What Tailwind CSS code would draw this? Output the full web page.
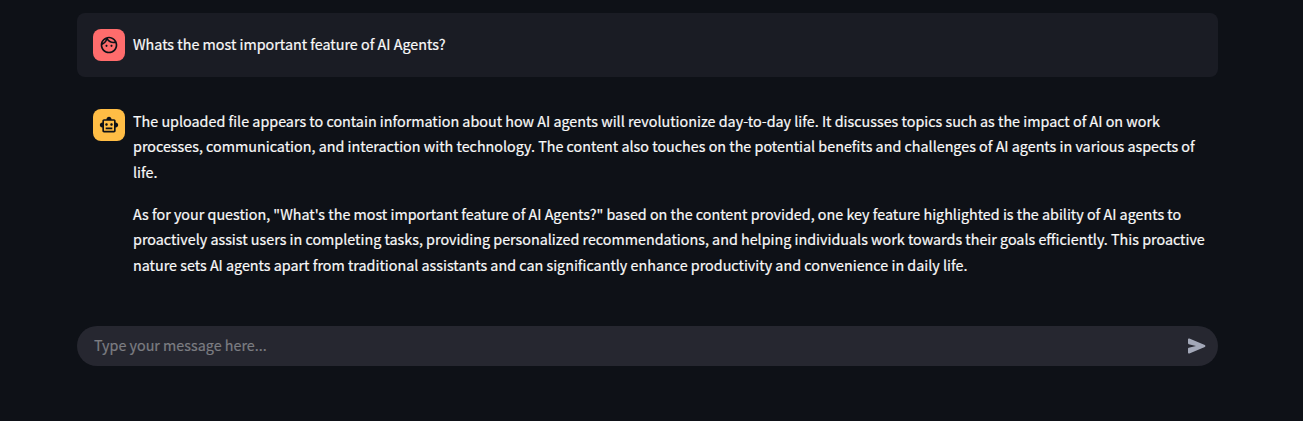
<!DOCTYPE html>
<html lang="en">
<head>
<meta charset="utf-8">
<title>Chat</title>
<script src="https://cdn.jsdelivr.net/npm/@tailwindcss/browser@4"></script>
</head>
<body class="h-screen overflow-hidden bg-[#0e1117] pl-[77px] pr-[85px] pt-[13px] font-['Noto_Sans_CJK_SC','Open_Sans',sans-serif] text-[14.34px] leading-[25.6px] text-[#fafafa] [-webkit-text-stroke:0.2px]">
<main class="flex flex-col">
  <section class="flex h-16 gap-2 rounded-lg bg-[#1a1c24] p-4">
    <div class="flex size-8 shrink-0 items-center justify-center rounded-lg bg-[#ff6c6c] text-[#0e1117]">
      <svg class="size-5" viewBox="0 0 24 24" fill="currentColor"><path d="M10.25 13c0 .69-.56 1.25-1.25 1.25S7.75 13.69 7.75 13s.56-1.25 1.25-1.25 1.25.56 1.25 1.25zM15 11.75c-.69 0-1.25.56-1.25 1.25s.56 1.25 1.25 1.25 1.25-.56 1.25-1.25-.56-1.25-1.25-1.25zm7 .25c0 5.52-4.48 10-10 10S2 17.52 2 12 6.48 2 12 2s10 4.48 10 10zM10.66 4.12C12.06 6.44 14.6 8 17.5 8c.46 0 .91-.05 1.34-.12C17.44 5.56 14.9 4 12 4c-.46 0-.91.05-1.34.12zM4.42 9.47c1.71-.97 3.03-2.55 3.66-4.44C6.37 6 5.05 7.58 4.42 9.47zM20 12c0-.78-.12-1.53-.33-2.24-.7.15-1.42.24-2.17.24-3.13 0-5.92-1.44-7.76-3.69C8.69 8.87 6.6 10.88 4 11.86c.01.04 0 .09 0 .14 0 4.41 3.59 8 8 8s8-3.59 8-8z"/></svg>
    </div>
    <p class="whitespace-nowrap pt-[2px]">Whats the most important feature of AI Agents?</p>
  </section>
  <section class="mt-4 flex h-[217px] gap-2 p-4">
    <div class="flex size-8 shrink-0 items-center justify-center rounded-lg bg-[#ffbd45] text-[#0e1117]">
      <svg class="size-5" viewBox="0 0 24 24" fill="currentColor"><path d="M20 9V7c0-1.1-.9-2-2-2h-3c0-1.66-1.34-3-3-3S9 3.34 9 5H6c-1.1 0-2 .9-2 2v2c-1.66 0-3 1.34-3 3s1.34 3 3 3v4c0 1.1.9 2 2 2h12c1.1 0 2-.9 2-2v-4c1.66 0 3-1.34 3-3s-1.34-3-3-3zm-2 10H6V7h12v12zm-9-6c-.83 0-1.5-.67-1.5-1.5S8.17 10 9 10s1.5.67 1.5 1.5S9.83 13 9 13zm7.5-1.5c0 .83-.67 1.5-1.5 1.5s-1.5-.67-1.5-1.5.67-1.5 1.5-1.5 1.5.67 1.5 1.5zM8 15h8v2H8v-2z"/></svg>
    </div>
    <div class="-mt-[1.2px] flex flex-col gap-4 whitespace-nowrap">
      <p>The uploaded file appears to contain information about how AI agents will revolutionize day-to-day life. It discusses topics such as the impact of AI on work<br>processes, communication, and interaction with technology. The content also touches on the potential benefits and challenges of AI agents in various aspects of<br>life.</p>
      <p>As for your question, "What's the most important feature of AI Agents?" based on the content provided, one key feature highlighted is the ability of AI agents to<br>proactively assist users in completing tasks, providing personalized recommendations, and helping individuals work towards their goals efficiently. This proactive<br>nature sets AI agents apart from traditional assistants and can significantly enhance productivity and convenience in daily life.</p>
    </div>
  </section>
  <div class="mt-4 flex h-10 items-center justify-between rounded-full bg-[#262730] pl-[17px] pr-[9px]">
    <span class="pb-[2px] text-[#7c7d82]">Type your message here...</span>
    <svg class="size-6 text-[#a3a8b8]" viewBox="0 0 24 24" fill="currentColor"><path d="M3 5.51v3.71c0 .46.31.86.76.97L11 12l-7.24 1.81c-.45.11-.76.51-.76.97v3.71c0 .72.73 1.2 1.39.92l15.42-6.49c.82-.34.82-1.5 0-1.84L4.39 4.58C3.73 4.31 3 4.8 3 5.51z"/></svg>
  </div>
</main>
</body>
</html>
